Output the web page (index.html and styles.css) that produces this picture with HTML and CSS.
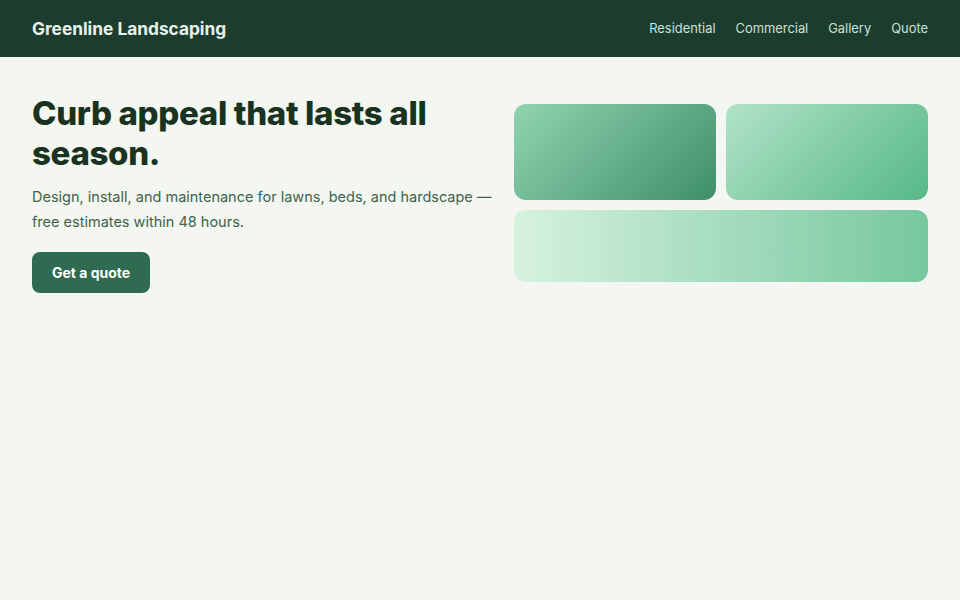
FILE: index.html
```html
<!DOCTYPE html>
<html lang="en">
<head>
  <meta charset="UTF-8" />
  <meta name="viewport" content="width=device-width, initial-scale=1" />
  <title>Greenline Landscaping</title>
  <link rel="stylesheet" href="styles.css">
</head>
<body>

  <header class="topbar">
    <a class="brand" href="#">Greenline Landscaping</a>
    <nav class="nav">
      <a href="#">Residential</a>
      <a href="#">Commercial</a>
      <a href="#">Gallery</a>
      <a href="#">Quote</a>
    </nav>
  </header>

  <main class="hero">
    <div class="hero-copy">
      <h1>Curb appeal that lasts all season.</h1>
      <p>Design, install, and maintenance for lawns, beds, and hardscape — free estimates within 48 hours.</p>
      <a class="btn" href="#">Get a quote</a>
    </div>

    <div class="tiles">
      <div class="tile tile-dark"></div>
      <div class="tile tile-light"></div>
      <div class="tile tile-wide"></div>
    </div>
  </main>

</body>
</html>
```

FILE: styles.css
```css
:root {
  --clr-forest: #1c3d2e;
  --clr-ink: #1a3320;
  --clr-text: #3d6349;
  --clr-btn: #2f6b51;
  --clr-bg: #f4f6f1;
}

* {
  box-sizing: border-box;
}

body {
  margin: 0;
  background: var(--clr-bg);
  font-family: Inter, 'Noto Sans', sans-serif;
  color: var(--clr-ink);
}

a {
  text-decoration: none;
}

.topbar {
  display: flex;
  align-items: center;
  justify-content: space-between;
  height: 57px;
  padding: 0 32px;
  background: var(--clr-forest);
}

.brand {
  color: #e8f2ea;
  font-weight: 700;
  font-size: 17.3px;
}

.nav {
  display: flex;
  gap: 20px;
}

.nav a {
  color: #cfe0d4;
  font-size: 12.9px;
}

.hero {
  display: grid;
  grid-template-columns: 1fr 414px;
  gap: 24px;
  align-items: center;
  padding: 36px 32px;
}

.hero-copy h1 {
  margin: 0 0 10px;
  font-size: 33px;
  line-height: 1.22;
  letter-spacing: -0.01em;
  font-weight: 800;
}

.hero-copy p {
  margin: 0 -10px 18px 0; /* let the dash stay on the first line */
  font-size: 14.5px;
  line-height: 25px;
  color: var(--clr-text);
}

.btn {
  display: inline-block;
  padding: 12px 20px;
  border-radius: 8px;
  background: var(--clr-btn);
  color: #fff;
  font-size: 14px;
  font-weight: 700;
}

/* gradient swatches standing in for photos */
.tiles {
  display: grid;
  grid-template-columns: 1fr 1fr;
  gap: 10px;
}

.tile {
  height: 96px;
  border-radius: 12px;
}

.tile-dark {
  background: linear-gradient(135deg, #90d4ae, #3f8f6b);
}

.tile-light {
  background: linear-gradient(135deg, #b2e3c7, #55b887);
}

.tile-wide {
  grid-column: span 2;
  height: 72px;
  background: linear-gradient(90deg, #d6f2de, #76c79e);
}
```
